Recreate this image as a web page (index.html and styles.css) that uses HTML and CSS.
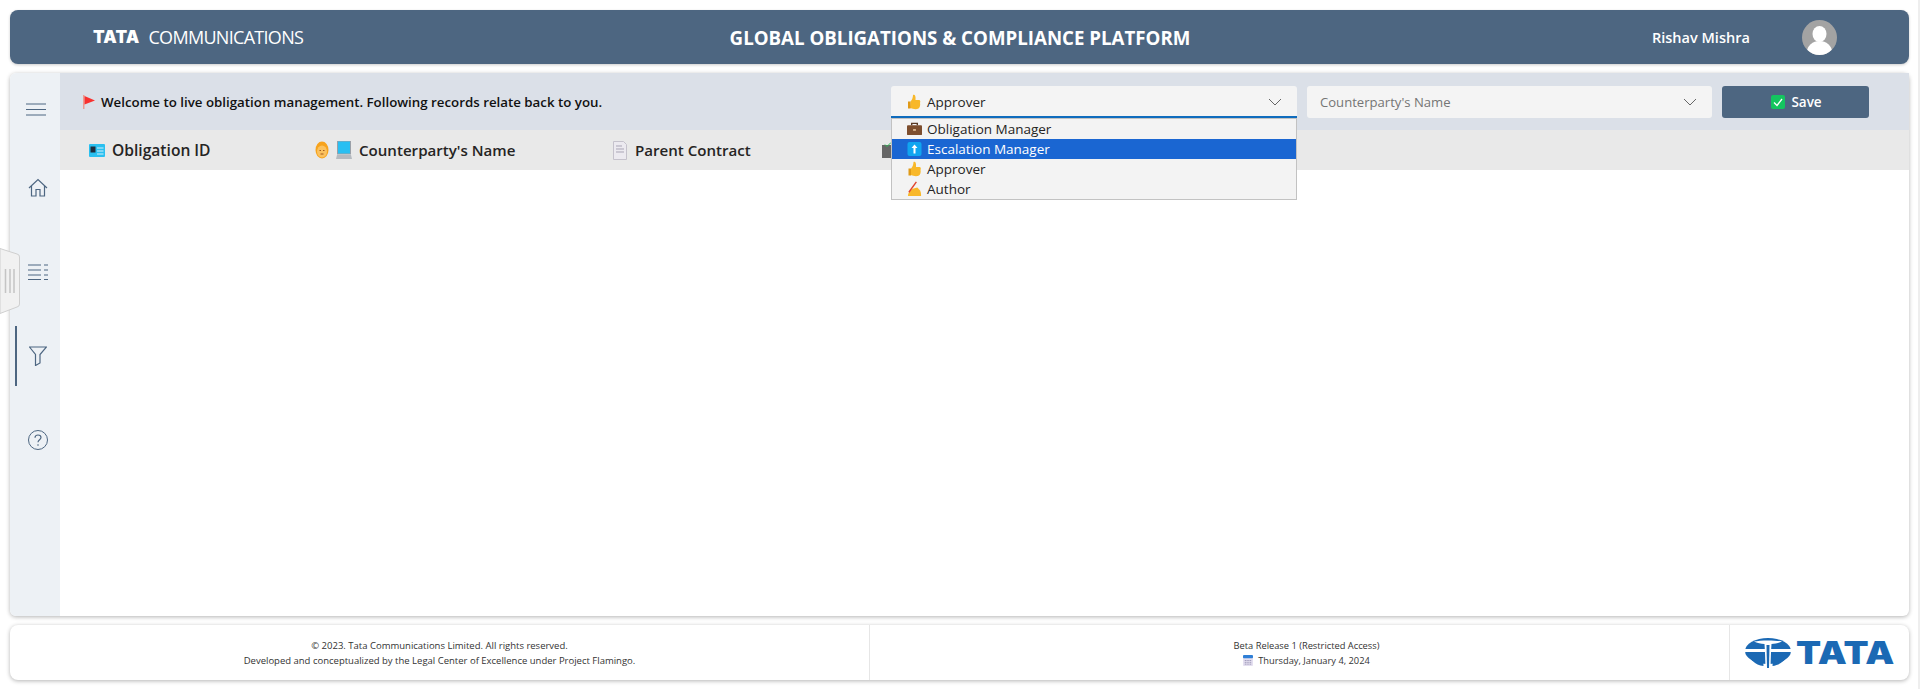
FILE: index.html
```html
<!DOCTYPE html>
<html lang="en">
<head>
    <meta charset="UTF-8">
    <meta name="viewport" content="width=device-width, initial-scale=1.0">
    <title>Global Obligations &amp; Compliance Platform</title>
    <link rel="stylesheet" href="styles.css">
</head>
<body>
    <header class="app-header">
        <div class="brand"><span class="brand-mark">TATA</span><span class="brand-name">COMMUNICATIONS</span></div>
        <h1 class="app-title">GLOBAL OBLIGATIONS &amp; COMPLIANCE PLATFORM</h1>
        <div class="user">
            <span class="user-name">Rishav Mishra</span>
            <svg class="avatar" viewBox="0 0 35 35">
                <defs><clipPath id="avatar-clip"><circle cx="17.5" cy="17.5" r="17.5"/></clipPath></defs>
                <circle cx="17.5" cy="17.5" r="17.5" fill="#a3a3a3"/>
                <g clip-path="url(#avatar-clip)" fill="#fff">
                    <ellipse cx="17.5" cy="14" rx="7" ry="8"/>
                    <ellipse cx="17.5" cy="32" rx="12.5" ry="11"/>
                </g>
            </svg>
        </div>
    </header>

    <main class="panel">
        <nav class="side-nav">
            <button class="nav-btn nav-menu">
                <svg viewBox="0 0 20 14" width="20" height="14" fill="none" stroke="#4d6681"><path d="M0 1h20M0 6.500h20M0 12h20"/></svg>
            </button>
            <button class="nav-btn nav-home">
                <svg viewBox="0 0 20 20" width="20" height="20" fill="none" stroke="#4d6681" stroke-width="1.200"><path d="M1 10 10 1.500 19 10M3.500 8v10h4.500v-6.500h4V18h4.500V8"/></svg>
            </button>
            <button class="nav-btn nav-list">
                <svg viewBox="0 0 20 16" width="20" height="16" fill="none" stroke="#4d6681" stroke-width="1.100"><path d="M0 1h13M16 1h4M0 6h13M16 6h4M0 11h13M16 11h4M0 15.500h13M16 15.500h4"/></svg>
            </button>
            <button class="nav-btn nav-filter active">
                <svg viewBox="0 0 18 20" width="18" height="20" fill="none" stroke="#4d6681" stroke-width="1.200"><path d="M.5 1h17L11 8.500V17l-4.500 2.500V8.500z"/></svg>
            </button>
            <button class="nav-btn nav-help">
                <svg viewBox="0 0 20 20" width="20" height="20" fill="none" stroke="#4d6681"><circle cx="10" cy="10" r="9.500"/><path d="M7 7.800C7 5.800 8.400 5 10 5s3 1 3 2.600c0 2-3 2.300-3 4.600" stroke-width="1.200"/><circle cx="10" cy="15" r=".8" fill="#4d6681" stroke="none"/></svg>
            </button>
        </nav>

        <section class="content">
            <div class="toolbar">
                <p class="welcome">
                    <svg class="flag" viewBox="0 0 12 14" width="12" height="14"><rect width="1.500" height="14" fill="#ee9a90"/><path d="M1.500 1 12 5.500 1.500 9.500z" fill="#f8312f"/></svg>
                    Welcome to live obligation management. Following records relate back to you.
                </p>
                <div class="dropdown-wrap">
                    <div class="dropdown dropdown-open">
                        <svg class="emoji" viewBox="0 0 14 16" width="14" height="16"><use href="#icon-thumb"/></svg>
                        <span>Approver</span>
                        <svg class="chevron" viewBox="0 0 14 8" width="14" height="8"><path d="M1 1l6 6 6-6" fill="none" stroke="#666"/></svg>
                    </div>
                    <ul class="dropdown-list">
                        <li><svg class="emoji" viewBox="0 0 16 14" width="15" height="14"><path d="M5 3V1h6v2" fill="none" stroke="#5a3a25" stroke-width="1.500"/><rect y="3" width="16" height="10.500" rx="1" fill="#7d4e2e"/><rect x="6.500" y="7" width="3" height="2" fill="#d8b48c"/></svg>Obligation Manager</li>
                        <li class="selected"><svg class="emoji" viewBox="0 0 14 14" width="15" height="14"><rect width="14" height="14" rx="2" fill="#10a5f0"/><path d="M7 2.500 10 6H8v5.500H6V6H4z" fill="#fff"/></svg>Escalation Manager</li>
                        <li><svg class="emoji" viewBox="0 0 14 16" width="15" height="16"><use href="#icon-thumb"/></svg>Approver</li>
                        <li><svg class="emoji" viewBox="0 0 16 16" width="15" height="15"><path d="M1 16c0-4 3-7 6-8l4-1 3 3c1 2 1 4 1 6z" fill="#f8b82a"/><path d="M2 12 10 1" stroke="#e0432c" stroke-width="1.500"/></svg>Author</li>
                    </ul>
                </div>
                <div class="dropdown dropdown-party">
                    <span class="placeholder">Counterparty's Name</span>
                    <svg class="chevron" viewBox="0 0 14 8" width="14" height="8"><path d="M1 1l6 6 6-6" fill="none" stroke="#666"/></svg>
                </div>
                <button class="save-btn">
                    <svg viewBox="0 0 14 14" width="14" height="14"><rect width="14" height="14" rx="2" fill="#14c55f"/><path d="M3 7.500 6 10.500 11 4" fill="none" stroke="#fff" stroke-width="1.300"/></svg>
                    Save
                </button>
            </div>

            <div class="col-headers">
                <div class="col col-id">
                    <svg class="emoji" viewBox="0 0 16 13" width="16" height="13"><rect width="16" height="13" rx="1" fill="#2ac0f0"/><rect x="1.500" y="2.500" width="5" height="6" fill="#1d2d3d"/><path d="M8 4h6.500M8 7h6.500M8 10h6.500" stroke="#d5eefa"/></svg>
                    Obligation ID
                </div>
                <div class="col col-party">
                    <svg class="emoji" viewBox="0 0 14 18" width="14" height="18"><ellipse cx="7" cy="9" rx="6.500" ry="8.500" fill="#f7a31c"/><ellipse cx="7" cy="10.500" rx="5" ry="6" fill="#fbc25f"/><path d="M4.500 9.500h1.500M8 9.500h1.500M5.500 13h3" stroke="#a2591d"/></svg>
                    <svg class="emoji" viewBox="0 0 16 19" width="16" height="19"><rect x="1.500" y="0" width="13" height="13" fill="#29bff2" stroke="#9aa0a8"/><path d="M1 14h14l1 4H0z" fill="#b5bac0"/></svg>
                    Counterparty's Name
                </div>
                <div class="col col-contract">
                    <svg class="emoji" viewBox="0 0 15 19" width="15" height="19"><path d="M.5.500h10l3 3V18.500H.5z" fill="#eceaf0" stroke="#c5c2cc"/><path d="M3 5h6M3 8h8M3 11h8" stroke="#a9a5b5"/></svg>
                    Parent Contract
                </div>
                <div class="col col-status">
                    <svg class="emoji" viewBox="0 0 14 16" width="14" height="16"><rect y="3" width="14" height="13" fill="#666"/><path d="M3 2.500 5 4.500 9 .5" fill="none" stroke="#2dbf55"/></svg>
                </div>
            </div>
            <div class="rows"></div>
        </section>

        <div class="grip-tab">
            <svg viewBox="0 0 20 66" width="20" height="66">
                <path d="M0 .5 17 6a3 3 0 0 1 2.500 3v47a3 3 0 0 1-2.500 3L0 65.500z" fill="#f1f1f1" stroke="#cfcfcf"/>
                <path d="M5.500 21v24M10 21v24M14 21v24" stroke="#c4c4c4" stroke-width="1.500"/>
            </svg>
        </div>
    </main>

    <footer class="app-footer">
        <div class="foot-cell foot-legal">
            <p>© 2023. Tata Communications Limited. All rights reserved.</p>
            <p>Developed and conceptualized by the Legal Center of Excellence under Project Flamingo.</p>
        </div>
        <div class="foot-cell foot-release">
            <p>Beta Release 1 (Restricted Access)</p>
            <p class="foot-date">
                <svg viewBox="0 0 11 12" width="10" height="11"><rect y="1" width="11" height="11" rx="1" fill="#e4dff0"/><rect y="0" width="11" height="3.500" rx="1" fill="#2f7fd6"/><path d="M2 6h7M2 8h7M2 10h7" stroke="#7f7aa0" stroke-dasharray="1 1"/></svg>
                Thursday, January 4, 2024
            </p>
        </div>
        <div class="foot-logo">
            <svg viewBox="0 0 46 30" width="46" height="30">
                <ellipse cx="23" cy="13" rx="23" ry="13" fill="#1b69b4"/>
                <path d="M0 11h46v3H0zM9 3.500c6-1.500 22-1.500 28 0-3 1.500-7 2.500-10.500 2.500-.5 7-.8 16-1 24h-5c-.2-8-.5-17-1-24C16 6 12 5 9 3.500z" fill="#fff"/>
                <path d="M21.500 7h3l-.5 23h-2z" fill="#1b69b4"/>
                <path d="M3 14h14.500l1 14C10 27 4 21 3 14zM43 14H28.500l-1 14c8.500-1 14.500-7 15.500-14z" fill="#1b69b4"/>
            </svg>
            <span class="logo-word">TATA</span>
        </div>
    </footer>

    <svg class="icon-defs" width="0" height="0">
        <symbol id="icon-thumb" viewBox="0 0 14 16">
            <path d="M3.500 7.500C5 6 6 3.500 6 1c1.500-1 3 .5 2.500 5h3.500c1.500 0 1.500 2 1 3 .5 1.500 0 4.500-1.500 5.500-2 1-5 .8-8.500-.5z" fill="#f8b82a"/>
            <rect x="1" y="7.500" width="2.500" height="7" fill="#e09a17"/>
        </symbol>
    </svg>
</body>
</html>
```

FILE: styles.css
```css
* {
    box-sizing: border-box;
}

html,
body {
    height: 100%;
}

body {
    margin: 0;
    padding: 10px 11px 9px 10px;
    display: flex;
    flex-direction: column;
    gap: 9px;
    background: #fff;
    box-shadow: inset -2px 0 0 #eeeeee;
    font-family: "Open Sans", "Noto Sans", Arial, sans-serif;
    color: #252423;
    overflow: hidden;
}

p,
ul,
h1 {
    margin: 0;
    padding: 0;
}

button {
    font-family: inherit;
    border: none;
    background: none;
    padding: 0;
}

svg {
    display: block;
    flex-shrink: 0;
}

.icon-defs {
    position: absolute;
}

/* header */
.app-header {
    height: 54px;
    display: flex;
    align-items: center;
    background: #4d6681;
    border-radius: 8px;
    color: #fff;
    box-shadow: 0 1px 3px rgba(0, 0, 0, 0.2);
}

.brand {
    width: 620px;
    padding-left: 83px;
    display: flex;
    align-items: center;
    gap: 9px;
}

.brand-mark {
    font-family: Inter, "Liberation Sans", sans-serif;
    font-size: 17px;
    font-weight: 900;
    letter-spacing: 0.2px;
}

.brand-name {
    font-size: 18px;
    letter-spacing: -0.7px;
}

.app-title {
    width: 660px;
    text-align: center;
    font-size: 18.7px;
    font-weight: 700;
}

.user {
    flex: 1;
    display: flex;
    align-items: center;
    padding-left: 362px;
}

.user-name {
    width: 150px;
    font-size: 14.5px;
    font-weight: 600;
}

.avatar {
    width: 35px;
    height: 35px;
}

/* main panel */
.panel {
    flex: 1;
    position: relative;
    display: flex;
    min-height: 0;
    border-radius: 6px;
    background: #fff;
    box-shadow: 0 1px 4px rgba(0, 0, 0, 0.3);
}

.side-nav {
    width: 50px;
    display: flex;
    flex-direction: column;
    align-items: center;
    background: #edf1f5;
    border-radius: 6px 0 0 6px;
    padding-left: 6px;
}

.nav-btn {
    display: flex;
    justify-content: center;
    align-items: center;
    width: 100%;
    height: 20px;
}

.nav-menu {
    margin-top: 27px;
    padding-right: 4px;
}

.nav-home {
    margin-top: 58px;
}

.nav-list {
    margin-top: 64px;
}

.nav-filter {
    margin-top: 64px;
}

.nav-help {
    margin-top: 64px;
}

.nav-filter.active {
    position: relative;
}

.nav-filter.active::before {
    content: "";
    position: absolute;
    left: -1px;
    top: -20px;
    width: 2px;
    height: 60px;
    background: #4d6681;
}

.grip-tab {
    position: absolute;
    left: -10px;
    top: 175px;
}

.content {
    flex: 1;
    display: flex;
    flex-direction: column;
    min-width: 0;
}

.toolbar {
    height: 57px;
    display: flex;
    align-items: center;
    gap: 10px;
    padding: 0 40px 0 23px;
    background: #dbe0e8;
}

.welcome {
    flex: 1;
    display: flex;
    align-items: center;
    gap: 6px;
    font-size: 13.3px;
    font-weight: 600;
    color: #111;
}

.dropdown-wrap {
    position: relative;
    width: 406px;
}

.dropdown {
    width: 406px;
    height: 32px;
    display: flex;
    align-items: center;
    gap: 6px;
    padding: 0 15px 0 13px;
    background: #f4f4f4;
    border-radius: 3px;
    font-size: 13.5px;
}

.dropdown-party {
    width: 405px;
}

.dropdown-open {
    border-bottom: 2px solid #0f6cbd;
    border-radius: 3px 3px 0 0;
    padding-top: 2px;
    padding-left: 16px;
}

.placeholder {
    font-size: 13.1px;
    color: #757575;
}

.chevron {
    margin-left: auto;
}

.dropdown-list {
    position: absolute;
    left: 0;
    right: 0;
    top: 32px;
    z-index: 2;
    list-style: none;
    background: #f3f3f3;
    border: 1px solid #c2c2c2;
    font-size: 13.5px;
}

.dropdown-list li {
    height: 20px;
    display: flex;
    align-items: center;
    gap: 5px;
    padding-left: 15px;
}

.dropdown-list li.selected {
    background: #1a66d2;
    color: #fff;
}

.save-btn {
    width: 147px;
    height: 32px;
    display: flex;
    justify-content: center;
    align-items: center;
    gap: 6px;
    padding-left: 2px;
    background: #4d6681;
    border-radius: 3px;
    color: #fff;
    font-size: 13.5px;
    font-weight: 600;
}

.col-headers {
    height: 40px;
    display: flex;
    align-items: center;
    padding-left: 29px;
    background: #e9e9e9;
    font-size: 15.1px;
    font-weight: 600;
}

.col {
    display: flex;
    align-items: center;
    gap: 7px;
}

.col-id {
    width: 226px;
    font-size: 15.6px;
}

.col-party {
    width: 298px;
}

.col-contract {
    width: 269px;
}

.rows {
    flex: 1;
}

/* footer */
.app-footer {
    height: 55px;
    display: flex;
    border-radius: 8px;
    box-shadow: 0 1px 4px rgba(0, 0, 0, 0.3);
    font-size: 9.5px;
    line-height: 15px;
    color: #333;
}

.foot-cell {
    display: flex;
    flex-direction: column;
    justify-content: center;
    align-items: center;
}

.foot-legal {
    width: 860px;
    border-right: 1px solid #e6e6e6;
}

.foot-release {
    flex: 1;
    padding-left: 14px;
    border-right: 1px solid #e6e6e6;
    font-size: 9.3px;
}

.foot-date {
    display: flex;
    align-items: center;
    gap: 5px;
}

.foot-logo {
    width: 179px;
    display: flex;
    align-items: center;
    gap: 5px;
    padding-left: 15px;
}

.logo-word {
    font-family: Inter, "Liberation Sans", sans-serif;
    font-size: 31px;
    font-weight: 900;
    letter-spacing: 0;
    transform: scaleX(1.18);
    transform-origin: left center;
    color: #1b69b4;
}
```
